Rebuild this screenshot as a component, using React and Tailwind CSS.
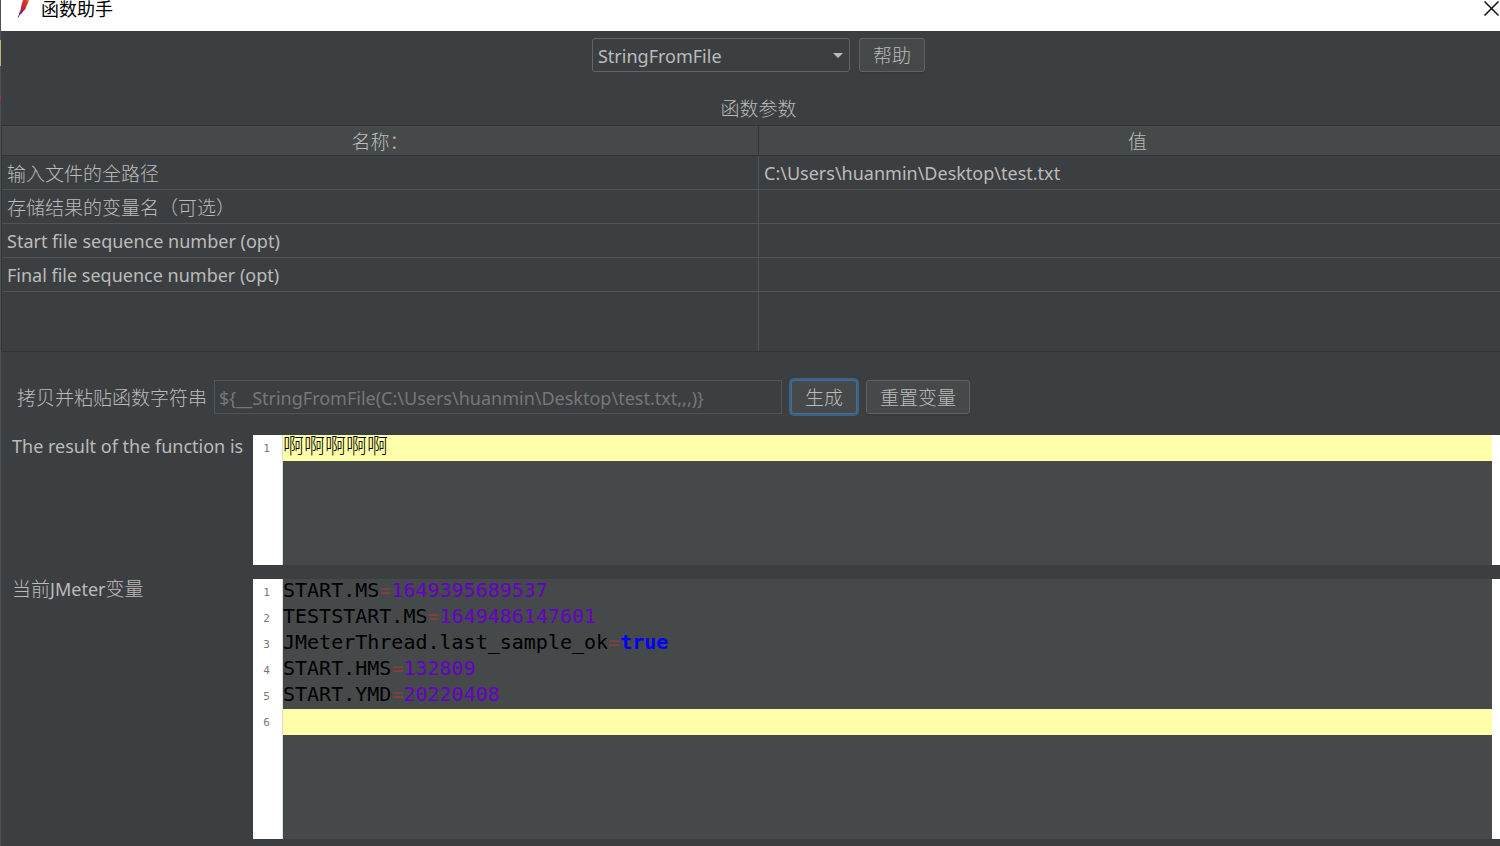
import React, { useState } from "react";

const params = [
  { name: "输入文件的全路径", value: "C:\\Users\\huanmin\\Desktop\\test.txt", cjk: true },
  { name: "存储结果的变量名（可选）", value: "", cjk: true },
  { name: "Start file sequence number (opt)", value: "" },
  { name: "Final file sequence number (opt)", value: "" },
];

const variables = [
  { key: "START.MS", value: "1649395689537" },
  { key: "TESTSTART.MS", value: "1649486147601" },
  { key: "JMeterThread.last_sample_ok", value: "true" },
  { key: "START.HMS", value: "132809" },
  { key: "START.YMD", value: "20220408" },
];

const FeatherIcon = () => (
  <svg width="14" height="18" viewBox="0 0 14 18" className="shrink-0" aria-hidden="true">
    <defs>
      <linearGradient id="feather" x1="1" y1="0" x2="0.2" y2="1">
        <stop offset="0" stopColor="#f08a24" />
        <stop offset="0.2" stopColor="#d9382e" />
        <stop offset="0.65" stopColor="#c0203f" />
        <stop offset="1" stopColor="#6d2a7d" />
      </linearGradient>
    </defs>
    <path d="M7 0H13L12 3L10.500 6L9.500 9L7.500 11L6 13L5 14L3.500 15L3 13.500L4.500 10L5.500 5Z" fill="url(#feather)" />
    <path d="M4 13.500L2 17.500" stroke="#5b3a76" strokeWidth="1" />
  </svg>
);

const CloseIcon = () => (
  <svg width="16" height="16" viewBox="0 0 16 16" aria-hidden="true">
    <path d="M0.500 0.500L14.500 14.500M14.500 0.500L0.500 14.500" stroke="#111" strokeWidth="1.500" />
  </svg>
);

// Read-only text area with a line number gutter; the active line is highlighted
const Editor = ({ id, labelId, lines, activeLine, className }) => (
  <div
    id={id}
    role="textbox"
    aria-multiline="true"
    aria-readonly="true"
    aria-labelledby={labelId}
    tabIndex={0}
    className={`flex min-w-0 flex-1 border-r-8 border-white bg-[#454949] font-['DejaVu_Sans_Mono','Noto_Sans_CJK_SC',monospace] text-xl text-black outline-none ${className}`}
  >
    <div className="w-[30px] shrink-0 border-r border-[#dddddd] bg-white text-center text-[11px] text-[#787878]">
      {lines.map((_, idx) => (
        <div key={idx} className="h-[26px] pr-0.5 leading-7">
          {idx + 1}
        </div>
      ))}
    </div>
    <div className="min-w-0 flex-1">
      {lines.map((line, idx) => (
        <div
          key={idx}
          className={`h-[26px] whitespace-pre leading-[22px] ${idx === activeLine ? "bg-[#ffffaa]" : ""}`}
        >
          {line}
        </div>
      ))}
    </div>
  </div>
);

const buttonClass =
  "h-[34px] rounded-[3px] border border-[#5e6263] bg-[#45494a] px-[13px] pt-0.5 text-[19px] leading-6 font-light shadow-[0_2px_0_#363a3b]";

const App = () => {
  const [fn, setFn] = useState("StringFromFile");

  const variableLines = variables.map(({ key, value }) => (
    <>
      {key}
      <span className="text-[#804040]">=</span>
      {value === "true" ? (
        <span className="font-bold text-[#0000ff]">{value}</span>
      ) : (
        <span className="text-[#6400c8]">{value}</span>
      )}
    </>
  ));

  return (
    <div className="flex min-h-screen overflow-hidden bg-[#3c3f41] font-['Noto_Sans','Noto_Sans_CJK_SC',sans-serif] text-lg leading-6 text-[#bbbbbb]">
      {/* Sliver of the window behind the dialog */}
      <div className="w-px shrink-0 bg-[#4c5052]">
        <div className="mt-10 h-[26px] bg-[#b9b67c]"></div>
        <div className="mt-[30px] h-[5px] bg-[#a02a74]"></div>
      </div>

      <main className="flex min-w-0 flex-1 flex-col">
        {/* Title bar */}
        <header className="flex h-[31px] items-start bg-white pl-[15px] text-black">
          <FeatherIcon />
          <h1 className="ml-[11px] flex-1 text-lg leading-[18px]">函数助手</h1>
          <button type="button" aria-label="关闭" className="pt-px">
            <CloseIcon />
          </button>
        </header>

        {/* The dialog runs past the right edge of the screen */}
        <div className="-mr-4">
          <div className="flex justify-center gap-[9px] pt-[7px]">
            <div className="relative">
              <select
                aria-label="函数"
                value={fn}
                onChange={(e) => setFn(e.target.value)}
                className="h-[34px] w-[258px] appearance-none rounded-[3px] border border-[#646464] bg-[#3c3f41] pt-0.5 pl-[5px] text-lg leading-6 outline-none"
              >
                <option>StringFromFile</option>
              </select>
              <svg width="10" height="5" viewBox="0 0 10 5" className="pointer-events-none absolute top-[15px] right-[7px]" aria-hidden="true">
                <path d="M0 0H10L5 5Z" fill="#bbbbbb" />
              </svg>
            </div>
            <button type="button" className={buttonClass}>
              帮助
            </button>
          </div>

          <h2 id="params-title" className="mt-[25px] mb-1 text-center text-[19px] leading-6 font-light">
            函数参数
          </h2>

          <table
            aria-labelledby="params-title"
            className="w-full table-fixed border-separate border-spacing-0 border-y border-l border-[#323536]"
          >
            <thead>
              <tr className="h-[30px] bg-[#45494a] text-[19px] leading-6">
                <th className="border-r border-b border-[#323536] p-0 pt-0.5 font-light">名称：</th>
                <th className="border-b border-[#323536] p-0 pt-0.5 font-light">值</th>
              </tr>
            </thead>
            <tbody>
              {params.map((param) => (
                <tr key={param.name} className="h-[34px]">
                  <td
                    className={`border-r border-b border-[#505455] px-[5px] ${param.cjk ? "pt-0.5 pb-0 text-[19px] font-light" : "py-0"}`}
                  >
                    {param.name}
                  </td>
                  <td className="border-b border-[#505455] px-[5px] py-0">{param.value}</td>
                </tr>
              ))}
              <tr className="h-[59px]">
                <td className="border-r border-[#505455] p-0"></td>
                <td className="p-0"></td>
              </tr>
            </tbody>
          </table>
        </div>

        {/* Function string */}
        <div className="flex items-center pt-7 pl-4">
          <label htmlFor="function-string" className="pt-0.5 text-[19px] leading-6 font-light">
            拷贝并粘贴函数字符串
          </label>
          <input
            id="function-string"
            type="text"
            readOnly
            value="${__StringFromFile(C:\Users\huanmin\Desktop\test.txt,,,)}"
            className="ml-[7px] h-[34px] w-[568px] border border-[#505455] bg-[#3c3f41] px-1 pt-0.5 text-lg leading-6 text-[#777777] outline-none"
          />
          <button
            type="button"
            className="ml-[9px] h-[34px] rounded-[3px] border border-[#466d94] bg-[#45494a] px-[13px] pt-0.5 text-[19px] leading-6 font-light ring-2 ring-[#3d6185]"
          >
            生成
          </button>
          <button type="button" className={`ml-[9px] ${buttonClass}`}>
            重置变量
          </button>
        </div>

        <div className="flex flex-1 flex-col gap-3.5 pt-[21px] pb-[7px] pl-[11px]">
          <div className="flex">
            <span id="result-label" className="w-[241px] shrink-0 leading-[22px]">
              The result of the function is
            </span>
            <Editor
              id="result"
              labelId="result-label"
              lines={[<span className="text-[21px] font-light">啊啊啊啊啊</span>]}
              activeLine={0}
              className="h-[130px]"
            />
          </div>
          <div className="flex flex-1">
            <span id="variables-label" className="w-[241px] shrink-0 text-[19px] leading-5 font-light">
              当前<span className="text-lg leading-5 font-normal">JMeter</span>变量
            </span>
            <Editor
              id="variables"
              labelId="variables-label"
              lines={[...variableLines, ""]}
              activeLine={5}
              className="min-h-[260px]"
            />
          </div>
        </div>
      </main>
    </div>
  );
};

export default App;
